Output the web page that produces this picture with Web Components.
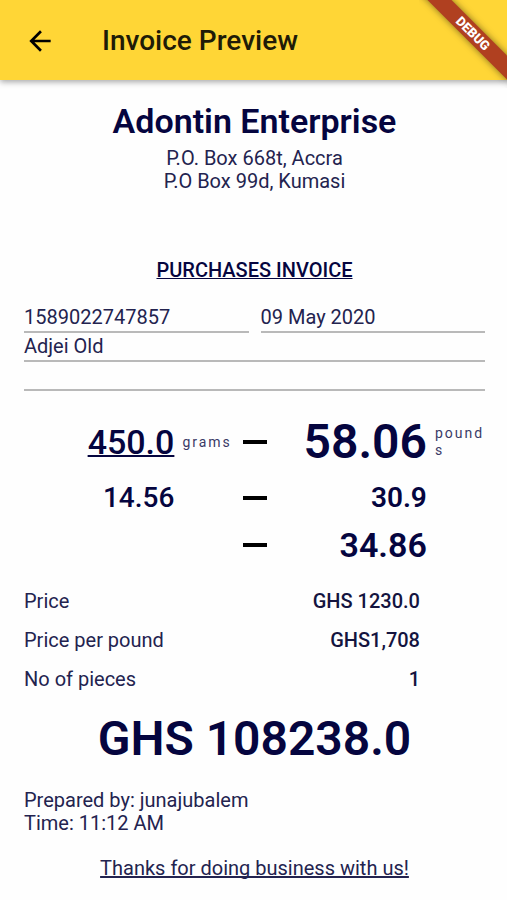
<!DOCTYPE html>
<html lang="en">
<head>
<meta charset="utf-8">
<meta name="viewport" content="width=device-width, initial-scale=1">
<title>Invoice Preview</title>
<style>
    body {
        margin: 0;
        background-color: #fefefe;
        color: #23234f;
        font-family: Roboto, "Liberation Sans", sans-serif;
        font-size: 20px;
        line-height: 23px;
        --ink: #05053f;
    }
</style>
</head>
<body>
<invoice-page></invoice-page>

<script>
function makeTemplate (html) {
    const template = document.createElement('template')
    template.innerHTML = html
    return template
}

class BaseElement extends HTMLElement {
    constructor () {
        super()

        this.attachShadow({ mode: 'open' })
            .appendChild(this.constructor.template.content.cloneNode(true))
    }
}

// Corner ribbon
customElements.define('debug-ribbon',
    class extends BaseElement {
        static template = makeTemplate(`
            <style>
                :host {
                    position: absolute;
                    top: 0;
                    right: 0;
                    width: 88px;
                    height: 88px;
                    overflow: hidden;
                    pointer-events: none;
                }

                span {
                    position: absolute;
                    top: 25px;
                    right: -36px;
                    width: 140px;
                    height: 17px;
                    transform: rotate(45deg);
                    background-color: #b04020;
                    box-shadow: 0 0 7px rgba(0, 0, 0, 0.5);
                    color: white;
                    font-size: 13px;
                    font-weight: 900;
                    line-height: 17px;
                    text-align: center;
                }
            </style>
            <span><slot></slot></span>
        `)
    }
)

customElements.define('app-bar',
    class extends BaseElement {
        static template = makeTemplate(`
            <style>
                :host {
                    display: block;
                    position: relative;
                }

                header {
                    display: flex;
                    align-items: center;
                    gap: 38px;
                    height: 80px;
                    padding: 2px 16px 0;
                    box-sizing: border-box;
                    background-color: #ffd636;
                    box-shadow: 0 2px 6px rgba(0, 0, 0, 0.35);
                }

                button {
                    display: flex;
                    align-items: center;
                    justify-content: center;
                    width: 48px;
                    height: 48px;
                    padding: 0;
                    border: 0;
                    background: none;
                    color: black;
                    cursor: pointer;
                }

                h1 {
                    margin: 0;
                    color: #201b07;
                    font-size: 28px;
                    font-weight: 500;
                    line-height: 34px;
                }
            </style>
            <header>
                <button type="button" aria-label="Back">
                    <svg width="32" height="32" viewBox="0 0 24 24" fill="currentColor" aria-hidden="true">
                        <path d="M20 11H7.83l5.59-5.59L12 4l-8 8 8 8 1.41-1.41L7.83 13H20v-2z"/>
                    </svg>
                </button>
                <h1><slot></slot></h1>
            </header>
            <debug-ribbon>DEBUG</debug-ribbon>
        `)

        connectedCallback () {
            this.shadowRoot.querySelector('button')
                .addEventListener('click', () => history.back())
        }
    }
)

// Company name and addresses
customElements.define('company-header',
    class extends BaseElement {
        static template = makeTemplate(`
            <style>
                :host {
                    display: block;
                    text-align: center;
                }

                h2 {
                    margin: 0 0 6px;
                    color: var(--ink);
                    font-size: 34px;
                    font-weight: 600;
                    line-height: 40px;
                }
            </style>
            <h2><slot name="name"></slot></h2>
            <slot></slot>
        `)
    }
)

// Line of text with a rule under it
customElements.define('ruled-field',
    class extends BaseElement {
        static template = makeTemplate(`
            <style>
                :host {
                    display: block;
                    min-height: 29px;
                    border-bottom: 2px solid #b9b9b9;
                    box-sizing: border-box;
                    line-height: 27px;
                }
            </style>
            <slot></slot>
        `)
    }
)

customElements.define('weight-row',
    class extends BaseElement {
        static template = makeTemplate(`
            <style>
                :host {
                    display: grid;
                    grid-template-columns: minmax(0, 3fr) minmax(0, 1fr) 28px minmax(0, 3fr) minmax(0, 1fr);
                    column-gap: 8px;
                    align-items: center;
                    color: var(--ink);
                    font-weight: 500;
                }

                .value {
                    text-align: right;
                }

                .unit {
                    color: #3a3a66;
                    font-size: 14px;
                    font-weight: 400;
                    letter-spacing: 2px;
                    line-height: 17px;
                    overflow-wrap: anywhere;
                }

                svg {
                    display: block;
                    justify-self: center;
                }
            </style>
            <span class="value"><slot name="from"></slot></span>
            <span class="unit"><slot name="from-unit"></slot></span>
            <svg width="24" height="4" viewBox="0 0 24 4" aria-hidden="true">
                <rect width="24" height="4" fill="black"/>
            </svg>
            <span class="value"><slot name="to"></slot></span>
            <span class="unit"><slot name="to-unit"></slot></span>
        `)
    }
)

customElements.define('detail-row',
    class extends BaseElement {
        static template = makeTemplate(`
            <style>
                :host {
                    display: flex;
                    justify-content: space-between;
                    padding-right: 65px;
                }

                .value {
                    color: #14143f;
                    font-weight: 500;
                }
            </style>
            <span><slot></slot></span>
            <span class="value"><slot name="value"></slot></span>
        `)
    }
)

customElements.define('invoice-page',
    class extends BaseElement {
        static template = makeTemplate(`
            <style>
                :host {
                    display: block;
                }

                main {
                    padding: 21px 22px 20px 24px;
                }

                h3 {
                    margin: 66px 0 22px;
                    color: var(--ink);
                    font-size: 20px;
                    font-weight: 500;
                    text-align: center;
                    text-decoration: underline;
                    text-decoration-thickness: 1px;
                    text-decoration-skip-ink: none;
                }

                .pair {
                    display: grid;
                    grid-template-columns: 1fr 1fr;
                    gap: 12px;
                }

                .weights {
                    display: grid;
                    margin-top: 23px;
                }

                .xl {
                    font-size: 48px;
                    font-weight: 600;
                    line-height: 56px;
                }

                .l {
                    font-size: 34px;
                    line-height: 40px;
                }

                .m {
                    font-size: 28px;
                    line-height: 55px;
                }

                .bold {
                    font-weight: 600;
                }

                .underline {
                    text-decoration: underline;
                    text-decoration-thickness: 2px;
                    text-decoration-skip-ink: none;
                }

                .details {
                    display: grid;
                    gap: 16px;
                    margin-top: 25px;
                }

                .total {
                    margin: 20px 0 22px;
                    color: var(--ink);
                    text-align: center;
                }

                .thanks {
                    margin: 22px 0 0;
                    text-align: center;
                    text-decoration: underline;
                    text-decoration-skip-ink: none;
                }
            </style>
            <app-bar>Invoice Preview</app-bar>
            <main>
                <company-header>
                    <span slot="name">Adontin Enterprise</span>
                    <div>P.O. Box 668t, Accra</div>
                    <div>P.O Box 99d, Kumasi</div>
                </company-header>

                <h3>PURCHASES INVOICE</h3>

                <div class="pair">
                    <ruled-field>1589022747857</ruled-field>
                    <ruled-field>09 May 2020</ruled-field>
                </div>
                <ruled-field>Adjei Old</ruled-field>
                <ruled-field></ruled-field>

                <div class="weights">
                    <weight-row>
                        <span slot="from" class="l underline">450.0</span>
                        <span slot="from-unit">grams</span>
                        <span slot="to" class="xl">58.06</span>
                        <span slot="to-unit">pounds</span>
                    </weight-row>
                    <weight-row>
                        <span slot="from" class="m">14.56</span>
                        <span slot="to" class="m bold">30.9</span>
                    </weight-row>
                    <weight-row>
                        <span slot="to" class="l bold">34.86</span>
                    </weight-row>
                </div>

                <div class="details">
                    <detail-row>Price<span slot="value">GHS 1230.0</span></detail-row>
                    <detail-row>Price per pound<span slot="value">GHS1,708</span></detail-row>
                    <detail-row>No of pieces<span slot="value">1</span></detail-row>
                </div>

                <div class="total xl">GHS 108238.0</div>

                <div>Prepared by: junajubalem</div>
                <div>Time: 11:12 AM</div>

                <p class="thanks">Thanks for doing business with us!</p>
            </main>
        `)
    }
)
</script>
</body>
</html>
